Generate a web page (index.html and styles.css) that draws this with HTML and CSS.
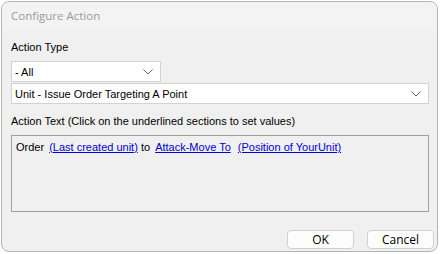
FILE: index.html
```html
<!DOCTYPE html>
<html>
    <head>
        <title>Configure Action</title>
        <link rel="stylesheet" href="styles.css">
    </head>
    <body>
        <div class="dialog">
            <div class="titlebar">Configure Action</div>
            <div class="content">
                <div class="label">Action Type</div>
                <div class="select short">
                    <span>- All</span>
                    <svg width="10" height="6" viewBox="0 0 10 6"><path d="M0.5 0.5 L5 5 L9.5 0.5" fill="none" stroke="#606060" stroke-width="1"/></svg>
                </div>
                <div class="select wide">
                    <span>Unit - Issue Order Targeting A Point</span>
                    <svg width="10" height="6" viewBox="0 0 10 6"><path d="M0.5 0.5 L5 5 L9.5 0.5" fill="none" stroke="#606060" stroke-width="1"/></svg>
                </div>
                <div class="label second">Action Text (Click on the underlined sections to set values)</div>
                <div class="textbox">
                    Order <a href="#">(Last created unit)</a> to <a href="#">Attack-Move To</a> <a href="#" class="gap">(Position of YourUnit)</a>
                </div>
                <div class="buttons">
                    <button>OK</button>
                    <button>Cancel</button>
                </div>
            </div>
        </div>
    </body>
</html>
```

FILE: styles.css
```css
body {
    margin: 0;
    background-color: #ffffff;
    font-family: "Liberation Sans", Arial, sans-serif;
    font-size: 11px;
}

.dialog {
    width: 437px;
    height: 251px;
    margin: 1px 0 0 1px;
    border: 1px solid #b4b4b4;
    border-radius: 8px;
    background-color: #f0f0f0;
    overflow: hidden;
    box-sizing: border-box;
}

.titlebar {
    height: 28px;
    line-height: 28px;
    padding-left: 9px;
    background-color: #f3f3f3;
    color: #9a9a9a;
    font-family: "Open Sans", sans-serif;
    font-size: 11.5px;
}

.content {
    padding: 0 8px 0 9px;
}

.label {
    height: 14px;
    line-height: 14px;
    margin-top: 10px;
    color: #000;
}

.select {
    display: flex;
    align-items: center;
    justify-content: space-between;
    height: 21px;
    margin-top: 7px;
    padding: 0 7px 0 3px;
    background-color: #fff;
    border: 1px solid #d2d2d2;
    box-sizing: border-box;
}

.select + .select {
    margin-top: 1px;
}

.select.short {
    width: 150px;
}

.select.wide {
    width: 418px;
}

.textbox {
    width: 418px;
    height: 77px;
    margin-top: 7px;
    padding: 4px 4px;
    line-height: 14px;
    border: 1px solid #a0a0a0;
    background-color: #f0f0f0;
    box-sizing: border-box;
}

.textbox a {
    color: #0000d8;
    margin-left: 2px;
}

.textbox a.gap {
    margin-left: 4px;
}

.buttons {
    display: flex;
    justify-content: flex-end;
    gap: 13px;
    margin-top: 18px;
    margin-right: -5px;
}

button {
    width: 67px;
    height: 19px;
    font-family: "Open Sans", sans-serif;
    font-size: 12px;
    line-height: 17px;
    color: #000;
    background-color: #fdfdfd;
    border: 1px solid #d0d0d0;
    border-radius: 4px;
    padding: 0;
}
```
